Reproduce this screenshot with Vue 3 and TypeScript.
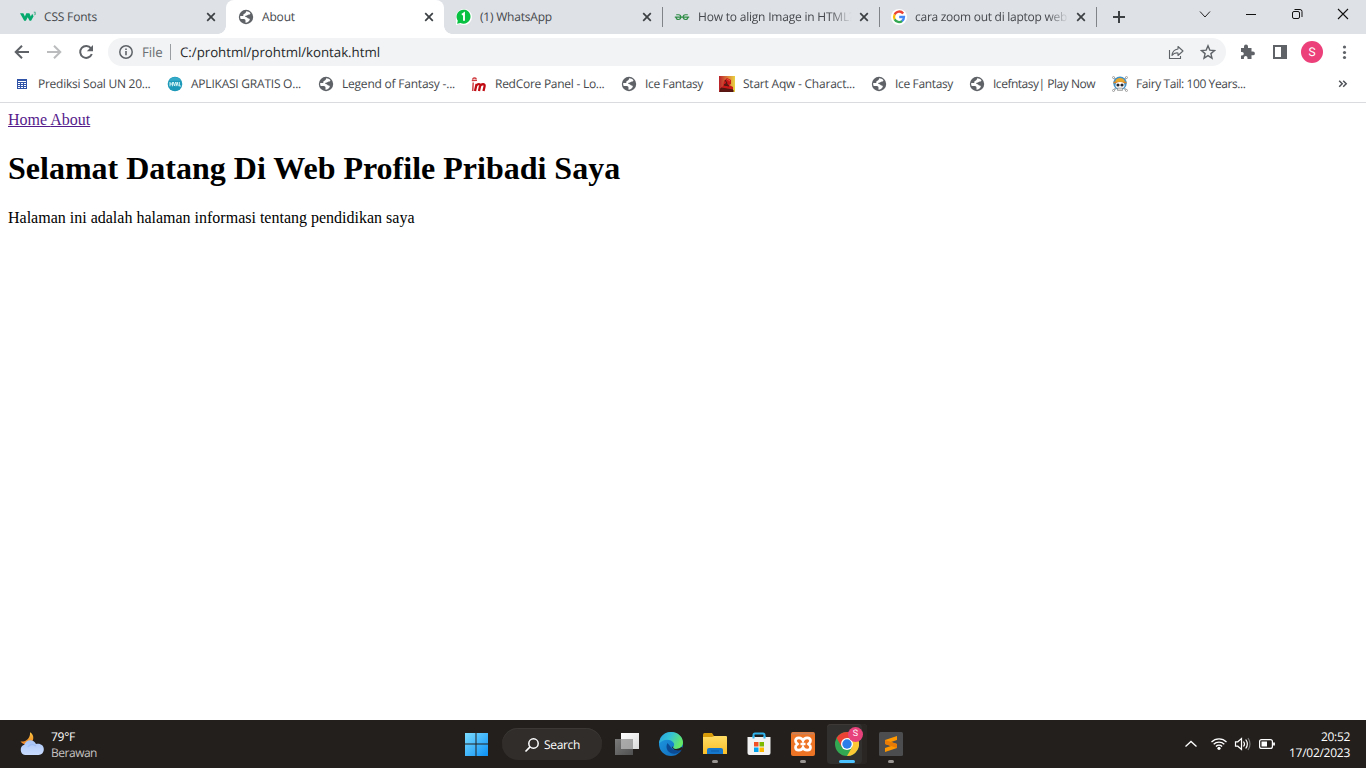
<script setup lang="ts">
interface Tab { icon: string; title: string; fit: number; size: number; active?: boolean; divider?: boolean; fade?: boolean }
interface Bookmark { icon: string; label: string; fit: number; size: number }

const tabs: Tab[] = [
  { icon: 'w3', title: 'CSS Fonts', fit: 53, size: 218 },
  { icon: 'globe', title: 'About', fit: 33, size: 218, active: true },
  { icon: 'whatsapp', title: '(1) WhatsApp', fit: 72, size: 218 },
  { icon: 'geeks', title: 'How to align Image in HTML?', fit: 156, size: 217, divider: true, fade: true },
  { icon: 'google', title: 'cara zoom out di laptop web', fit: 152, size: 217, divider: true, fade: true },
]

const bookmarks: Bookmark[] = [
  { icon: 'sheet', label: 'Prediksi Soal UN 20...', fit: 112.5, size: 153 },
  { icon: 'hval', label: 'APLIKASI GRATIS O...', fit: 110, size: 151 },
  { icon: 'globe', label: 'Legend of Fantasy -...', fit: 113, size: 153 },
  { icon: 'redcore', label: 'RedCore Panel - Lo...', fit: 109.5, size: 150 },
  { icon: 'globe', label: 'Ice Fantasy', fit: 58, size: 98 },
  { icon: 'aqw', label: 'Start Aqw - Charact...', fit: 112, size: 152 },
  { icon: 'globe', label: 'Ice Fantasy', fit: 58, size: 98 },
  { icon: 'globe', label: 'Icefntasy| Play Now', fit: 102, size: 143 },
  { icon: 'skull', label: 'Fairy Tail: 100 Years...', fit: 109.5, size: 150 },
]

// Adjusts tracking so a label occupies the given width.
const vFit = {
  mounted(el: HTMLElement, binding: { value: number }) {
    const range = document.createRange()
    range.selectNodeContents(el)
    const width = range.getBoundingClientRect().width
    const count = (el.textContent ?? '').length
    if (count > 1) el.style.letterSpacing = `${(binding.value - width) / count}px`
  },
}
</script>

<template>
  <svg class="defs" aria-hidden="true">
    <defs>
      <linearGradient id="win" x1="0" y1="0" x2="1" y2="1"><stop offset="0" stop-color="#7bdcff" /><stop offset="1" stop-color="#0b90f5" /></linearGradient>
      <linearGradient id="cloud" x1="0" y1="0" x2="0" y2="1"><stop offset="0" stop-color="#a5c2f5" /><stop offset=".6" stop-color="#bed4fb" /><stop offset="1" stop-color="#c9dcff" /></linearGradient>
      <linearGradient id="moon" x1="0" y1="0" x2="0" y2="1"><stop offset="0" stop-color="#f8c442" /><stop offset="1" stop-color="#ee7f20" /></linearGradient>
      <linearGradient id="folder" x1="0" y1="0" x2="0" y2="1"><stop offset="0" stop-color="#ffdc64" /><stop offset="1" stop-color="#fabf28" /></linearGradient>
      <linearGradient id="edgeTop" x1="0" y1="0" x2="1" y2=".4"><stop offset="0" stop-color="#249ee0" /><stop offset=".5" stop-color="#35c3d5" /><stop offset="1" stop-color="#64e866" /></linearGradient>
      <linearGradient id="edgeLow" x1="0" y1="0" x2="1" y2="1"><stop offset="0" stop-color="#1f9de4" /><stop offset="1" stop-color="#0f66b8" /></linearGradient>
      <linearGradient id="pane" x1="0" y1="0" x2="1" y2="1"><stop offset="0" stop-color="#fff" /><stop offset="1" stop-color="#dadada" /></linearGradient>
      <linearGradient id="paneDark" x1="0" y1="0" x2="1" y2="1"><stop offset="0" stop-color="#858585" /><stop offset="1" stop-color="#555" /></linearGradient>
      <linearGradient id="aqwBg" x1="0" y1="0" x2="1" y2="0"><stop offset="0" stop-color="#b8202a" /><stop offset=".55" stop-color="#dd8038" /><stop offset="1" stop-color="#e8d340" /></linearGradient>
    </defs>
    <symbol id="globe" viewBox="0 0 16 16">
      <circle cx="8" cy="8" r="7.2" fill="#5f6368" />
      <path d="M8.200 2.300C7.800 3.600 7.600 4.400 6.500 4.700 5.300 5 5.100 6 5.400 7H2.200C2 8.200 2.200 9.200 2.700 9.900H5.900C7 10 7.500 10.500 7.500 11.500V13.700C9.600 13.600 11.300 12.400 11.800 10.800 11.900 9.900 11.200 9.600 10.400 9.500 9.400 9.400 9.600 8.300 8.600 8.200 7.500 8.200 7.100 8 7.300 7.100 7.600 6.500 8.700 7 9.300 6.300 9.800 5.600 10.500 5.700 11.500 5.500 12.300 5.300 12.300 4.400 12.400 4.200 11.300 3 9.900 2.300 8.200 2.300Z" fill="#fff" />
    </symbol>
    <symbol id="w3" viewBox="0 0 16 16">
      <path d="M0 4.200h3.400l1.500 3.200 1.400-3.200h3.100l1.400 3.200 1.400-2.700 1.400 2.500-2.500 4.600H9.600L7.700 8.300 5.900 11.800H4.200Z" fill="#04aa6d" />
      <path d="M13.800 3.200h1.600l-.8 1c.8 0 1.100.4 1 .9-.1.700-1.100.8-1.700.4" fill="none" stroke="#35aa7d" stroke-width=".8" />
    </symbol>
    <symbol id="whatsapp" viewBox="0 0 16 16">
      <path d="M0 16V8a8 8 0 1 1 8 8c-1.700 0-3-.4-4-1.100Z" fill="#fff" />
      <path d="m1.100 14.700.7-3A7 7 0 1 1 4.500 14Z" fill="#08c143" />
      <path d="m5.900 5.800 2.100-1.500v7.500" fill="none" stroke="#fff" stroke-width="1.900" />
    </symbol>
    <symbol id="geeks" viewBox="0 0 16 16">
      <path d="M2.200 5.700h2.500c1.400 0 2.100 1 2.100 2.400 0 1.500-.9 2.400-2.300 2.400-1.400 0-2.300-.8-2.400-2.400M.8 8.100h14.400M13.900 8.100c-.1 1.600-1 2.400-2.400 2.400S9.200 9.600 9.200 8.100c0-1.400.7-2.400 2.100-2.400h2.500" fill="none" stroke="#2f8d46" stroke-width="1.150" />
    </symbol>
    <symbol id="google" viewBox="0 0 16 16">
      <circle cx="8" cy="8" r="8" fill="#fff" />
      <g fill="none" stroke-width="2.300"><path d="M12.200 4.500A5 5 0 0 0 3.600 5.600" stroke="#ea4335" /><path d="M3.700 5.500a5 5 0 0 0 0 5" stroke="#fbbc05" /><path d="M3.600 10.400a5 5 0 0 0 7.700 1.400" stroke="#34a853" /><path d="M11 12c1.500-1.100 2-2.300 2-4H8.200" stroke="#4285f4" /></g>
    </symbol>
    <symbol id="sheet" viewBox="0 0 16 16">
      <path d="M3 3h10v10H3Z" fill="#3153a8" />
      <path d="M4 5.500h8" stroke="#fff" /><path d="M4 7.500h2M7 7.500h2M10 7.500h2M4 9.500h2M7 9.500h2M10 9.500h2M4 11.500h2M7 11.500h2M10 11.500h2" stroke="#fff" stroke-width="1" />
    </symbol>
    <symbol id="hval" viewBox="0 0 16 16">
      <circle cx="8" cy="8" r="7.300" fill="#1c99b8" /><path d="M2 4.700a7 7 0 0 1 12 0" fill="#35a9c8" />
      <path d="M3 6v4.300M5.400 6v4.300M3 8h2.400M6.300 6l1.200 4L8.700 6M9.100 10.200 10.200 6l1 4.200M12.300 6v4h1.600" stroke="#d9f6f7" stroke-width="1" fill="none" />
    </symbol>
    <symbol id="redcore" viewBox="0 0 16 16">
      <path d="M.8 4.600 6 4.200M1.500 3.600C2 1.900 3.800 1.300 5.500 2.800" fill="none" stroke="#d03c40" stroke-width="1.400" />
      <path d="M1.700 15 2.200 6.500" stroke="#cf4448" stroke-width="1.500" fill="none" />
      <path d="m4 15 1.600-7M5.300 9.600c1.300-2 4.200-2 3.800.2L8 15M9.100 9.900c1.500-2.300 5.100-2.200 4.500.4L12.500 15" stroke="#c00b13" stroke-width="2.300" fill="none" />
    </symbol>
    <symbol id="aqw" viewBox="0 0 16 16">
      <path d="M0 0h16v16H0Z" fill="url(#aqwBg)" /><path d="m1 13 3-3 1-5 3-3 4 2v4l-2 1 4 2v3Z" fill="#c71919" /><path d="m6 4 2 3-3 2 5 1M2 12l12 2V16H1Z" stroke="#4e1712" fill="#601713" />
      <path d="m8 3 3 2" stroke="#ef5139" />
    </symbol>
    <symbol id="skull" viewBox="0 0 16 16">
      <path d="m1.500 1.500 13 13m0-13-13 13" stroke="#b8bbc0" stroke-width="2" />
      <g fill="#fff" stroke="#888" stroke-width=".7"><circle cx="1.500" cy="1.500" r="1" /><circle cx="14.500" cy="1.500" r="1" /><circle cx="1.500" cy="14.500" r="1" /><circle cx="14.500" cy="14.500" r="1" /></g>
      <circle cx="8" cy="7.300" r="6.700" fill="#3f91c7" /><path d="M3.200 6c0-5.300 9.600-5.300 9.600 0Z" fill="#e9a92e" /><path d="M1.500 6.500h13" stroke="#d98324" stroke-width="1.500" />
      <ellipse cx="8" cy="9.200" rx="4.500" ry="3.200" fill="#fff" /><path d="M5.500 12h5v2.500h-5Z" fill="#d9dadc" stroke="#777" stroke-width=".5" /><circle cx="6" cy="9" r="1.600" fill="#252932" /><circle cx="10" cy="9" r="1.600" fill="#252932" />
    </symbol>
    <symbol id="close" viewBox="0 0 16 16"><path d="m4.200 4.200 7.600 7.600m0-7.600-7.600 7.600" stroke="#3c4043" stroke-width="1.700" /></symbol>
  </svg>

  <div class="screen">
    <header class="strip">
      <div v-for="tab in tabs" :key="tab.title" class="tab" :class="{ active: tab.active, divider: tab.divider }" :style="{ width: tab.size + 'px' }">
        <svg class="i16"><use :href="'#' + tab.icon" /></svg>
        <span class="title" :class="{ fade: tab.fade }"><span v-fit="tab.fit">{{ tab.title }}</span></span>
        <svg class="i16"><use href="#close" /></svg>
      </div>
      <div class="newtab"><svg width="16" height="16"><path d="M8 2v12M2 8h12" stroke="#3c4043" stroke-width="2" /></svg></div>
      <div class="winbtns">
        <svg width="46" height="28"><path d="m18 11.500 5 5.500 5-5.500" fill="none" stroke="#222" /></svg>
        <svg width="46" height="28"><path d="M18 14.500h10" stroke="#111" /></svg>
        <svg width="46" height="28"><rect x="18.500" y="11.500" width="7" height="7" rx="1.500" fill="none" stroke="#111" /><path d="M20.500 9.500h5.500a2 2 0 0 1 2 2V17" fill="none" stroke="#111" /></svg>
        <svg width="46" height="28"><path d="m18 9 10 10m0-10L18 19" stroke="#111" stroke-width="1.100" /></svg>
      </div>
    </header>

    <div class="toolbar">
      <svg class="nav" width="100" height="36" fill="none">
        <path d="M29 18H16m6-6.300L15.700 18l6.300 6.300" stroke="#5f6368" stroke-width="2" />
        <path d="M47 18h13m-6-6.300 6.300 6.300-6.300 6.300" stroke="#babcbe" stroke-width="2" />
        <path d="M91 14.300a6 6 0 1 0 .8 5.700" stroke="#5f6368" stroke-width="2" /><path d="M93 11v6.200h-6.200Z" fill="#5f6368" />
      </svg>
      <div class="omnibox">
        <svg width="16" height="16" fill="none"><circle cx="8" cy="8" r="6.200" stroke="#5f6368" stroke-width="1.500" /><path d="M8 7v4.300M8 4.500v1.500" stroke="#5f6368" stroke-width="1.600" /></svg>
        <span class="scheme"><span v-fit="20.500">File</span></span><i class="bar"></i><span class="url"><span v-fit="200">C:/prohtml/prohtml/kontak.html</span></span>
        <svg class="share" width="16" height="16" fill="none" stroke="#5f6368" stroke-width="1.100"><path d="M1.500 6v8.500h11V12" /><path d="M10 2.500 15 7l-5 4.500V9C7 8.500 5.500 9.500 4 11.500 4.300 7.500 6.500 5.500 10 5Z" stroke-linejoin="round" /></svg>
        <svg class="star" width="16" height="16"><path d="m8 1.800 1.800 4.300 4.700.4-3.600 3.100 1.100 4.600L8 11.700l-4 2.500 1.100-4.600-3.600-3.100 4.700-.4Z" fill="none" stroke="#5f6368" stroke-width="1.400" /></svg>
      </div>
      <svg class="actions" width="140" height="36">
        <path d="M15 14h3v-1.500a2 2 0 0 1 4 0V14h3.500v3.500H27a1.900 1.900 0 0 1 0 3.800h-1.500V25H21.500v-1.300a1.800 1.800 0 0 0-3.600 0V25H15v-3.500h1a1.800 1.800 0 0 0 0-3.600h-1Z" fill="#5f6368" />
        <path d="M48 12h12v12H48Z" fill="none" stroke="#5f6368" stroke-width="2" /><path d="M55 12h6v12h-6Z" fill="#5f6368" />
        <circle cx="86" cy="18" r="11" fill="#ec407a" /><text x="86" y="22" text-anchor="middle" font-size="12" fill="#fff" font-family="Roboto, sans-serif">S</text>
        <g fill="#5f6368"><circle cx="118.500" cy="13" r="1.600" /><circle cx="118.500" cy="18.500" r="1.600" /><circle cx="118.500" cy="23.500" r="1.600" /></g>
      </svg>
    </div>

    <nav class="bookmarks">
      <div v-for="(mark, n) in bookmarks" :key="n" class="mark" :style="{ width: mark.size + 'px' }">
        <svg class="i16"><use :href="'#' + mark.icon" /></svg><span class="label"><span v-fit="mark.fit">{{ mark.label }}</span></span>
      </div>
      <svg class="more" width="10" height="10"><path d="m1.200 1.700 3 3-3 3m4-6 3 3-3 3" fill="none" stroke="#4d5156" stroke-width="1.500" /></svg>
    </nav>

    <main class="page">
      <a>Home </a><a>About</a>
      <h1>Selamat Datang Di Web Profile Pribadi Saya</h1>
      <p>Halaman ini adalah halaman informasi tentang pendidikan saya</p>
    </main>

    <footer class="taskbar">
      <div class="weather">
        <svg width="26" height="26"><path d="M11 1.200c4.500 2.500 4.500 9-.5 11.500-4 1.800-7.500 0-9-2.200 6 .5 10-3.500 9.500-9.300Z" fill="url(#moon)" /><path d="M6 24a5.300 5.300 0 0 1-.7-10.200C6.500 8 15 7.500 17 13c4.500-1 7.800 1.500 7.800 5.300 0 3.400-2.300 5.700-5.300 5.700Z" fill="url(#cloud)" /><path d="M9 16c1.500-3 5.500-3.500 8-1" fill="none" stroke="#86aaf0" stroke-width="1.500" opacity=".4" /></svg>
        <div class="report"><div class="temp"><span v-fit="24">79°F</span></div><div class="cond"><span v-fit="46">Berawan</span></div></div>
      </div>
      <div class="apps">
        <svg class="start" width="24" height="24"><path d="M1 1h10.500v10.500H1Zm11.500 0H24v10.500H12.500ZM1 12.500h10.500V24H1Zm11.500 0H24V24H12.500Z" fill="url(#win)" /></svg>
        <div class="search"><svg width="16" height="16"><circle cx="9.500" cy="6.500" r="4.700" fill="none" stroke="#fff" stroke-width="1.500" /><path d="M6.300 9.700 1.500 14.500" stroke="#fff" stroke-width="1.700" /></svg><span v-fit="36">Search</span></div>
        <div class="app"><svg width="24" height="24"><path d="M6 1h18v16H6Z" fill="url(#pane)" /><path d="M0 7h18v16H0Z" fill="url(#paneDark)" opacity=".9" /><path d="M6 7h12v10H6Z" fill="#b5b5b5" opacity=".75" /></svg></div>
        <div class="app"><svg width="24" height="24">
          <circle cx="12" cy="12" r="12" fill="url(#edgeLow)" />
          <path d="M8.400 11c-3 6 2 12 8.600 10.500 2.500-.6 4.500-2 5.700-4.100-1.700 1-8 2-10.500-2Z" fill="#0b4b96" />
          <path d="M0 11.500C.7 4.500 5.500 0 12 0c7 0 12 5 12 10.500 0 4.300-3.500 6.500-7.200 6.500-2.600 0-3.200-1.200-2.500-2.200.9-1.100 1.200-2.600.2-4.100C12 6.500 4 6.500 0 11.500Z" fill="url(#edgeTop)" />
          <path d="M14.300 14.800c-.7 1 .2 2.200 2.500 2.200 2.200 0 4.300-.8 5.800-2l1.300 1-1.500 2c-3.500 1-7.500.5-9-2-.6-1 .2-2 .9-1.200Z" fill="#231f1d" />
        </svg></div>
        <div class="app run"><svg width="24" height="24"><path d="M0 2.500Q0 1 1.500 1H9l2 3-2 3H0Z" fill="#d79a09" /><path d="M0 5h9l2-1h12q1 0 1 1v17H0Z" fill="url(#folder)" /><path d="M4 22v-4q0-2 2-2h12q2 0 2 2v4Z" fill="#1678cc" /><path d="M8 19h8" stroke="#0d5ca9" /></svg></div>
        <div class="app"><svg width="24" height="24"><path d="M6.500 6V3q0-1.500 1.500-1.500h8q1.500 0 1.500 1.500v3" fill="none" stroke="#31b4eb" stroke-width="2" /><path d="M.5 5h23v16q0 2-2 2h-19q-2 0-2-2Z" fill="#f2f2f2" /><path d="M6.500 6.500V4m11 2.500V4" stroke="#31b4eb" stroke-width="2" /><path d="M7 10h4.500v4.500H7Z" fill="#f05024" /><path d="M12.500 10H17v4.500h-4.500Z" fill="#7eb900" /><path d="M7 15.500h4.500V20H7Z" fill="#00a3ee" /><path d="M12.500 15.500H17V20h-4.500Z" fill="#ffb800" /></svg></div>
        <div class="app run"><svg width="24" height="24"><rect width="24" height="24" rx="2" fill="#ee7425" /><path d="M1 1.500h22" stroke="#c78059" stroke-width="2" /><path d="M12 8.500C10.500 4.800 4.500 5 4.500 8.800c0 1.700 1 2.200 2 3.200-1 1-2 1.500-2 3.200 0 3.800 6 4 7.500.3 1.500 3.700 7.500 3.500 7.500-.3 0-1.700-1-2.200-2-3.200 1-1 2-1.500 2-3.200 0-3.800-6-4-7.500-.3Z" fill="none" stroke="#fff" stroke-width="2.700" /><path d="M9.500 12h5" stroke="#fff" stroke-width="2.500" /></svg></div>
        <div class="app chrome">
          <svg width="24" height="24"><circle cx="12" cy="12" r="12" fill="#33a853" /><path d="M1.600 6A12 12 0 0 1 22.400 6H12L6.800 15Z" fill="#ea4335" /><path d="M22.400 6A12 12 0 0 1 12 24l5.200-9L12 6Z" fill="#fcc934" /><circle cx="12" cy="12" r="6" fill="#fff" /><circle cx="12" cy="12" r="4.700" fill="#2b7de9" /></svg>
          <span class="badge">S</span>
        </div>
        <div class="app run"><svg width="24" height="24"><rect width="24" height="24" rx="1.500" fill="#4b4d4e" /><path d="m6 8 12-4v4l-6 2 6 2v4L6 20v-4l6-2-6-2Z" fill="#ff9800" /><path d="m6 8 12 4v4L6 12Z" fill="#e77b05" /></svg></div>
      </div>
      <div class="tray">
        <svg width="96" height="24" fill="none">
          <path d="m5.500 14.500 5.500-5 5.500 5" stroke="#fff" stroke-width="1.300" />
          <path d="M31.500 10a10.500 10.500 0 0 1 15 0M33.700 12.300a7.500 7.500 0 0 1 10.600 0M35.900 14.500a4.400 4.400 0 0 1 6.200 0" stroke="#fff" stroke-width="1.300" /><circle cx="39" cy="16.300" r="1.600" fill="#fff" />
          <path d="M55.500 9.800h2.300L61.500 6.500v11l-3.700-3.300h-2.300Z" stroke="#fff" stroke-width="1.200" /><path d="M63.500 9.500q2 2.500 0 5M65.700 7.500q3.300 4.500 0 9" stroke="#fff" stroke-width="1.200" /><path d="M68 6q4 6 0 12" stroke="#777" stroke-width="1.200" />
          <rect x="79.600" y="7.600" width="12.800" height="8.800" rx="2" stroke="#fff" stroke-width="1.200" /><path d="M81.500 9.500h5.500v5h-5.500Z" fill="#fff" /><path d="M94 10.500v3" stroke="#fff" stroke-width="1.800" />
        </svg>
        <div class="clock"><div><span v-fit="29">20:52</span></div><div><span v-fit="61">17/02/2023</span></div></div>
      </div>
    </footer>
  </div>
</template>

<style>
html, body { margin: 0; overflow: hidden; background: #fff; }
</style>

<style scoped>
.defs { position: absolute; width: 0; height: 0; }
.screen { width: 1366px; height: 768px; display: flex; flex-direction: column; font-family: "Open Sans", "Noto Sans", sans-serif; font-size: 12px; text-rendering: geometricPrecision; white-space: nowrap; overflow: hidden; }
svg { display: block; flex: none; }
.i16 { width: 16px; height: 16px; }
.strip { height: 34px; background: #dee1e6; display: flex; padding-left: 8px; flex: none; }
.tab { box-sizing: border-box; position: relative; height: 34px; display: flex; align-items: center; padding: 0 7px 0 12px; color: #45484c; flex: none; font-size: 12px; }
.title { flex: 1; margin-left: 8px; min-width: 0; overflow: hidden; line-height: 18px; }
.title.fade { margin-right: 1px; mask-image: linear-gradient(90deg, #000 84%, transparent 98%); }
.tab.active { background: #fff; border-radius: 8px 8px 0 0; }
.tab.active::before, .tab.active::after { content: ""; position: absolute; bottom: 0; width: 8px; height: 8px; }
.tab.active::before { left: -8px; background: radial-gradient(circle at 0 0, transparent 7.5px, #fff 8px); }
.tab.active::after { right: -8px; background: radial-gradient(circle at 100% 0, transparent 7.5px, #fff 8px); }
.tab.divider::before { content: ""; position: absolute; left: 0; top: 7px; width: 1px; height: 20px; background: #808387; }
.newtab { width: 40px; height: 20px; margin-top: 7px; border-left: 1px solid #808387; display: flex; align-items: center; padding-left: 14px; box-sizing: border-box; }
.winbtns { display: flex; margin-left: auto; }
.toolbar { height: 36px; display: flex; align-items: center; flex: none; }
.nav { margin-right: 8px; }
.omnibox { box-sizing: border-box; width: 1118px; height: 28px; border-radius: 14px; background: #f1f3f4; display: flex; align-items: center; padding: 0 10px; }
.scheme { margin-left: 8px; width: 28px; color: #6b6f73; font-size: 13.3px; }
.bar { width: 1px; height: 16px; background: #9a9da1; }
.url { margin-left: 9px; color: #26282b; font-size: 13.3px; }
.share { margin-left: auto; }
.star { margin-left: 16px; }
.bookmarks { border-bottom: 1px solid #d9dbde; display: flex; align-items: center; box-sizing: border-box; height: 33px; flex: none; padding: 0 18px 4px 14px; }
.mark { display: flex; gap: 8px; align-items: center; color: #45484c; font-size: 12px; flex: none; line-height: 18px; }
.more { margin-left: auto; }
.page { flex: 1; padding: 8px; font: 16px "Liberation Serif", "Times New Roman", serif; color: #000; text-rendering: auto; }
.page a { color: #551a8b; text-decoration: underline; white-space: pre; }
.page h1 { font-size: 32px; line-height: 36px; margin: 21px 0 23px; }
.page p { margin: 0; }
.taskbar { height: 48px; flex: none; background: #231f1d; color: #fff; display: grid; grid-template-columns: 456px 458px 1fr; align-items: center; }
.weather { display: flex; padding-left: 19px; gap: 6px; align-items: center; line-height: 16px; font-size: 12px; }
.report { padding-top: 2px; }
.cond { color: #c6c3c1; }
.apps { display: flex; align-items: center; height: 48px; }
.start { margin-left: 8px; margin-right: 14px; }
.search { box-sizing: border-box; flex: none; width: 100px; height: 32px; border-radius: 16px; background: #302d2b; box-shadow: inset 0 1px #3b3835; display: flex; align-items: center; padding: 1px 0 0 22px; gap: 4px; font-size: 12px; margin-right: 5px; }
.app { position: relative; box-sizing: border-box; width: 40px; height: 40px; margin-right: 4px; display: grid; place-items: center; flex: none; }
.app.run::after, .chrome::after { content: ""; position: absolute; left: 17px; bottom: 1px; width: 6px; height: 3px; border-radius: 2px; background: #989593; }
.chrome { background: #32302e; border-radius: 4px; box-shadow: inset -5px 0 #292624, inset 0 1px #3c3937; }
.chrome::after { left: 12px; width: 16px; background: #4cc2ff; }
.badge { position: absolute; left: 21px; top: 3px; width: 15px; height: 15px; border-radius: 50%; background: #e8427c; font: 9px/15px Roboto, sans-serif; text-align: center; }
.tray { display: flex; align-items: center; justify-content: flex-end; padding-right: 16px; }
.clock { margin-left: 13px; padding-top: 1px; width: 61px; text-align: right; line-height: 16px; font-size: 12px; }
</style>
